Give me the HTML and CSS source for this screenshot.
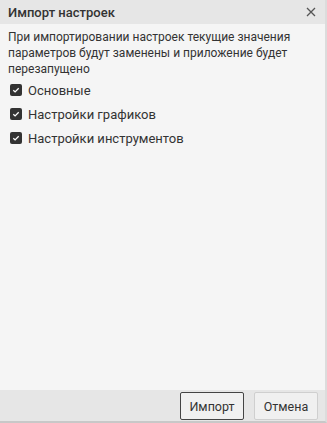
FILE: index.html
```html
<!DOCTYPE html>
<html>
<head>
<meta charset="utf-8">
<link rel="stylesheet" href="styles.css">
</head>
<body>
<div class="dialog">
  <div class="header">
    <span class="title">Импорт настроек</span>
    <svg class="close" width="10" height="10" viewBox="0 0 10 10"><path d="M1 1L9 9M9 1L1 9" stroke="#555" stroke-width="1.3"/></svg>
  </div>
  <div class="content">
    <p class="desc">При импортировании настроек текущие значения параметров будут заменены и приложение будет перезапущено</p>
    <div class="list">
      <label class="row"><span class="cb"><svg width="12" height="12" viewBox="0 0 12 12"><path d="M3.3 6.2L5.1 7.9L8.7 4.3" fill="none" stroke="#fff" stroke-width="1.3"/></svg></span>Основные</label>
      <label class="row"><span class="cb"><svg width="12" height="12" viewBox="0 0 12 12"><path d="M3.3 6.2L5.1 7.9L8.7 4.3" fill="none" stroke="#fff" stroke-width="1.3"/></svg></span>Настройки графиков</label>
      <label class="row"><span class="cb"><svg width="12" height="12" viewBox="0 0 12 12"><path d="M3.3 6.2L5.1 7.9L8.7 4.3" fill="none" stroke="#fff" stroke-width="1.3"/></svg></span>Настройки инструментов</label>
    </div>
  </div>
  <div class="footer">
    <button class="btn primary">Импорт</button>
    <button class="btn">Отмена</button>
  </div>
</div>
</body>
</html>
```
FILE: styles.css
```css
html, body { margin: 0; padding: 0; }
body {
  width: 327px;
  height: 423px;
  font-family: Roboto, "Liberation Sans", sans-serif;
  color: #333;
  overflow: hidden;
}
.dialog {
  width: 327px;
  height: 423px;
  box-sizing: border-box;
  display: flex;
  flex-direction: column;
  background: #f5f5f5;
  border-right: 2px solid #dcdcdc;
  border-bottom: 2px solid #c8c8c8;
}
.header {
  height: 24px;
  flex: none;
  display: flex;
  align-items: center;
  justify-content: space-between;
  padding: 0 8px 0 8px;
  background: #e6e6e6;
}
.title {
  font-size: 13px;
  font-weight: 500;
  color: #333;
}
.close { margin-right: 1px; }
.content {
  flex: 1;
  padding: 5px 8px 0 8px;
}
.desc {
  margin: 0;
  font-size: 12px;
  line-height: 16px;
  color: #333;
}
.list {
  margin-top: 1px;
  display: flex;
  flex-direction: column;
}
.row {
  height: 24px;
  display: flex;
  align-items: center;
  font-size: 13px;
  color: #333;
}
.cb {
  width: 12px;
  height: 12px;
  border-radius: 2px;
  background: #333;
  margin: 0 6px 0 2px;
  display: flex;
}
.footer {
  height: 31px;
  flex: none;
  background: #e6e6e6;
  display: flex;
  justify-content: flex-end;
  align-items: center;
  gap: 10px;
  padding: 0 7px 0 0;
}
.btn {
  height: 28px;
  width: 64px;
  font-family: Roboto, "Liberation Sans", sans-serif;
  font-size: 12.5px;
  color: #333;
  background: #f0f0f0;
  border: 1px solid #cfcfcf;
  border-radius: 2px;
  padding: 0;
  margin-top: 1px;
}
.btn.primary { border-color: #444; }
```
